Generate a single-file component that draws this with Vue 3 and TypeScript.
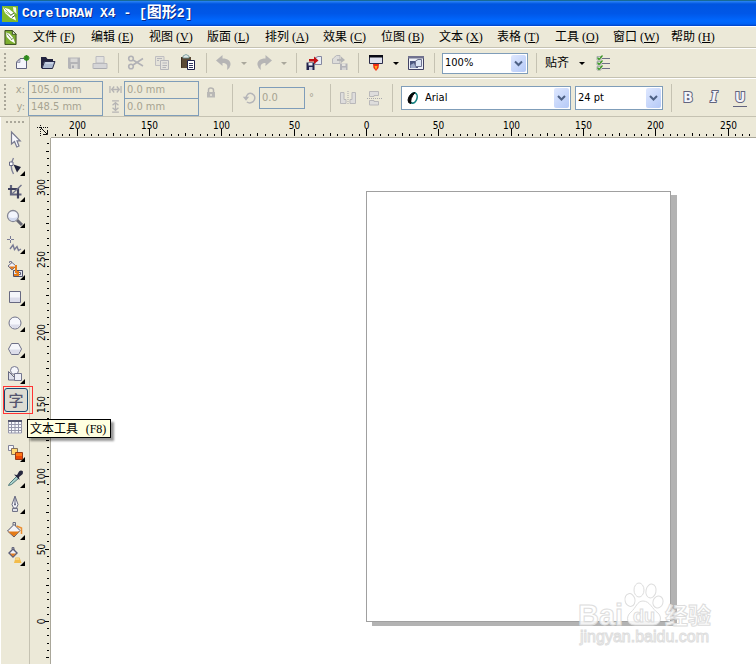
<script setup lang="ts">
import { computed, onMounted, onUnmounted, ref } from 'vue'

interface Menu { label: string; key: string }
interface Tool { id: string; name: string; flyout: boolean }
interface Tick { at: number; size: number; label: string }

const menus: Menu[] = [
  { label: '文件', key: 'F' },
  { label: '编辑', key: 'E' },
  { label: '视图', key: 'V' },
  { label: '版面', key: 'L' },
  { label: '排列', key: 'A' },
  { label: '效果', key: 'C' },
  { label: '位图', key: 'B' },
  { label: '文本', key: 'X' },
  { label: '表格', key: 'T' },
  { label: '工具', key: 'O' },
  { label: '窗口', key: 'W' },
  { label: '帮助', key: 'H' },
]

const standardBar: string[] = [
  'new', 'open', 'save', 'print', '|', 'cut', 'copy', 'paste', '|',
  'undo', 'v-off', 'redo', 'v-off', '|', 'import', 'export', '|', 'launch', 'v', 'welcome', '|',
]

const tools: Tool[] = [
  { id: 'pick', name: '挑选工具', flyout: false },
  { id: 'shape', name: '形状工具', flyout: true },
  { id: 'crop', name: '裁剪工具', flyout: true },
  { id: 'zoom', name: '缩放工具', flyout: true },
  { id: 'freehand', name: '手绘工具', flyout: true },
  { id: 'smart', name: '智能填充', flyout: true },
  { id: 'rect', name: '矩形工具', flyout: true },
  { id: 'ellipse', name: '椭圆形工具', flyout: true },
  { id: 'polygon', name: '多边形工具', flyout: true },
  { id: 'basic', name: '基本形状', flyout: true },
  { id: 'text', name: '文本工具', flyout: false },
  { id: 'table', name: '表格工具', flyout: false },
  { id: 'blend', name: '交互式调和工具', flyout: true },
  { id: 'dropper', name: '滴管工具', flyout: true },
  { id: 'pen', name: '轮廓工具', flyout: true },
  { id: 'fill', name: '填充工具', flyout: true },
  { id: 'ifill', name: '交互式填充', flyout: true },
]

const icons: Record<string, string> = {
  new: '<path d="M8 5.500H14.500V15.500H4.500V9z" fill="#f4f5fb" stroke="#5f617d"/><path d="M4.500 9.500L8 6V9.500z" fill="#c9cbdc" stroke="#77798f" stroke-width=".6"/><path d="M14.500 2v6M11.500 5h6M12.500 3l4 4M16.500 3l-4 4" stroke="#2f8a1c" stroke-width="1.700"/>',
  open: '<path d="M3 4H8L9.500 6H15V9H6L4 15H3z" fill="#23233f"/><path d="M6.500 8.500H17L14.500 15.500H4z" fill="#aebbd2" stroke="#262848"/><path d="M7.500 10H15" stroke="#e3e9f4"/>',
  save: '<path d="M4 4.500H16V16H5L4 15z" fill="#b4b4b7"/><path d="M6.500 5.500H13.500V9H6.500z" fill="#d8d7d5"/><path d="M7 11H13.500V16H7z" fill="#d9d8d5"/><path d="M8 12.500H10V15H8z" fill="#aaaab0"/>',
  print: '<path d="M6 3.500H14V10H6z" fill="#e2e1df" stroke="#bcbcc0"/><path d="M3 10.500H17V15.500H3z" fill="#d5d5d7" stroke="#b7b7bb"/><path d="M4 15.500H16" stroke="#aaabb0"/>',
  cut: '<g fill="none" stroke="#b2b2b6" stroke-width="1.600"><circle cx="5" cy="5.500" r="2.300"/><circle cx="5" cy="13.500" r="2.300"/><path d="M7 7L17 13M7 12L17 5.500"/></g>',
  copy: '<path d="M3.500 3.500H12V12.500H3.500z" fill="#e4e2d9" stroke="#c0bfc1"/><path d="M8.500 7.500H16.500V16.500H8.500z" fill="#e4e2dc" stroke="#b5b5ba"/><path d="M5 5.500H10M5 7.500H7M10.500 10H15M10.500 12.500H15M10.500 14.500H14" stroke="#b5b5ba"/>',
  paste: '<path d="M3 4H13V15H3z" fill="#5a4935"/><path d="M3.500 4.500V14.500" stroke="#3d3024"/><path d="M5 5V3Q8 0 11 3V5z" fill="#e0e6e5" stroke="#6a9393" stroke-width=".8"/><path d="M9.500 7.500H16.500V16.500H9.500z" fill="#fff" stroke="#1e2149"/><path d="M11 10.500H15M11 12.500H15M11 14.500H15" stroke="#343960"/>',
  undo: '<path d="M2 7.500L8.500 2V5.500C14 5.500 17 8 16.500 12Q16 15 13 17C14 12 13 10 8.500 10V13z" fill="#b6b5b5"/>',
  redo: '<path d="M18 7.500L11.500 2V5.500C6 5.500 3 8 3.500 12Q4 15 7 17C6 12 7 10 11.500 10V13z" fill="#b6b5b5"/>',
  import: '<path d="M11 5L14 3.500H17.500V11.500H11z" fill="#e8edf6" stroke="#8587a0"/><path d="M2.500 9.500H10.500V17H2.500z" fill="#23244d"/><path d="M4.500 10H8.500V12.500H4.500z" fill="#eceef5"/><path d="M5 14H8.500V17H5z" fill="#c6c9dc"/><path d="M5 6H10V3.500L14.500 7.500L10 11V8.500H5z" fill="#c20f12"/>',
  export: '<path d="M3.500 5L6.500 2.500H10V10.500H2.500V6z" fill="#dddcda" stroke="#b7b7bb"/><path d="M10 10.500H17.500V17H10z" fill="#b3b3b8"/><path d="M12 10.500H15.500V13H12z" fill="#e5e3dd"/><path d="M12 14.500H16V17H12z" fill="#d6d5d4"/><path d="M7 6H11V3.500L15 7L11 10V8H7z" fill="#b4b4b6"/>',
  launch: '<path d="M3.500 2.500H16.500V10.500H3.500z" fill="#dfe1ed" stroke="#2b2c4a"/><path d="M3 2H17V4.500H3z" fill="#090a13"/><path d="M7 11H13L12.500 15L10 18L7.500 15z" fill="#f02b12"/><path d="M8.500 13H11.500L10 17z" fill="#ffae18"/>',
  welcome: '<path d="M2.500 3.500H17.500V16.500H2.500z" fill="#eef1f8" stroke="#424364"/><path d="M2 3H18V5.500H2z" fill="#71728e"/><path d="M4 8H12V15H4z" fill="#4c577f"/><path d="M9.500 8L12 6.500H15.500V13.500H9.500z" fill="#dce5f4" stroke="#6f7391"/><path d="M4.500 12L8 10L10 15H4.500z" fill="#9fabc8"/>',
  options: '<path d="M9 5.500H17M9 10.500H17M9 15.500H17" stroke="#6e7086" stroke-width="1.200"/><path d="M4 3.500H8V7H4zM4 8.500H8V12H4zM4 13.500H8V17H4z" fill="#f4f4f4" stroke="#92929d" stroke-width=".7"/><path d="M4.500 4.500L6 6.500L9.500 2.500M4.500 9.500L6 11.500L9.500 7.500M4.500 14.500L6 16.500L9.500 12.500" fill="none" stroke="#3c9925" stroke-width="1.300"/>',
  pick: '<path d="M6.500 2V14L9.500 11.500L11.800 17L14 16L12 10.800H15.200z" fill="#f7f8fd" stroke="#77798f" stroke-width="1.200"/>',
  shape: '<path d="M8.500 2Q4 10 8.500 18" fill="none" stroke="#81839a" stroke-width="1.400"/><path d="M4.500 6H8V9.500H4.500z" fill="#fff" stroke="#686b86"/><path d="M8.500 8.500L16 11L12 16.500z" fill="#21233b"/>',
  crop: '<path d="M6 3V12.500H16.500" fill="none" stroke="#63657f" stroke-width="2.200"/><path d="M3 7H13V16.500" fill="none" stroke="#3f415d" stroke-width="2.200"/><path d="M7 12L16.500 3" stroke="#70728a" stroke-width="1.300"/>',
  zoom: '<path d="M12 12L17 17" stroke="#666773" stroke-width="3"/><circle cx="8" cy="8" r="5.500" fill="#f3f5fd" stroke="#858795" stroke-width="1.300"/><path d="M3.500 9Q8 11 12.500 9Q11.500 13 8 13Q4.500 13 3.500 9" fill="#d3daee"/>',
  freehand: '<path d="M5.500 2V9M2 5.500H9" stroke="#797b94"/><path d="M5 5H6V6H5z" fill="#fff"/><path d="M5 15L8 11L9.500 15.500L12 12.500L13.500 16.500L16 15" fill="none" stroke="#787a94" stroke-width="1.400"/>',
  smart: '<path d="M4.500 3V1.500H6.500V6" fill="none" stroke="#76798f"/><path d="M3 6L7 2.500L11 6L7 10z" fill="#f2f2f7" stroke="#6e7087"/><path d="M4 6.500H10L7 9.500z" fill="#df7519"/><path d="M8.500 10.500H17.500V16.500H8.500z" fill="#e3e5ef" stroke="#4e5069"/><path d="M12 12.500H15.500V14.500H12z" fill="#fff" stroke="#5c5e78"/><path d="M11 5V12H13V15H9" fill="none" stroke="#e77c16" stroke-width="2"/>',
  rect: '<path d="M4.500 5.500H15.500V16.500H4.500z" fill="#f5f6fa" stroke="#676981"/><path d="M5 11.500H15V16H5z" fill="#dcddea"/>',
  ellipse: '<circle cx="10" cy="11" r="6" fill="#f6f7fc" stroke="#707289"/><path d="M5 12.500H15Q13.500 16.300 10 16.300Q6.500 16.300 5 12.500" fill="#dcddea"/>',
  polygon: '<path d="M3.500 11L6.500 5.500H13.500L16.500 11L13.500 16.500H6.500z" fill="#f5f6fb" stroke="#6d6f87"/><path d="M4.500 11.500H15.500L13 16H7z" fill="#dcddea"/>',
  basic: '<circle cx="9.500" cy="6.500" r="4" fill="#f5f6fb" stroke="#74768e"/><path d="M3.500 7.500V16H12z" fill="#dedfea" stroke="#666880"/><path d="M9.500 9.500H16.500V16.500H9.500z" fill="#eeeff7" stroke="#74768e"/>',
  table: '<path d="M3 4.500H17V17.500H3z" fill="#f8f9fc"/><path d="M3.500 4.500H16.500V17H3.500zM3.500 8.500H16.500M3.500 11.500H16.500M3.500 14.500H16.500M6.500 5V17M10 5V17M13.500 5V17" fill="none" stroke="#9596aa"/><path d="M3 5H17" stroke="#55576f" stroke-width="2"/>',
  blend: '<path d="M3.500 3.500H8.500V8.500H3.500z" fill="#f8f8fc" stroke="#808298"/><path d="M6.500 6.500H12.500V12.500H6.500z" fill="#ffd875" stroke="#85705c"/><path d="M10.500 10.500H17.500V17.500H10.500z" fill="#ff7514" stroke="#983a19"/><path d="M11 14H17V17H11z" fill="#ee4806"/>',
  dropper: '<path d="M12 8L4.500 15.500L3.500 17.500L6.500 16.500L14 10" fill="#a7cfca" stroke="#527a7b"/><path d="M9 6.500L12 7L14 3.500Q16 1.500 18 3.500Q18.500 6 16 7.500L14 9L14.500 12z" fill="#26283f"/>',
  pen: '<path d="M10 2L7 10.500L8.500 14H11.500L13 10.500z" fill="#f6f7fb" stroke="#696b81"/><path d="M10 4V10" stroke="#60637d"/><circle cx="10" cy="10.500" r="1" fill="#5f617b"/><path d="M7.500 14.500H12.500V17.500H7.500z" fill="#dfe1e9" stroke="#707287"/>',
  fill: '<path d="M8 5V2.500H10.500V6" fill="none" stroke="#696b80"/><path d="M2.500 11L9 4.500L15 10.500L9 17z" fill="#f3f4f9" stroke="#505269"/><path d="M3 11.500H14.500L9 16.500z" fill="#e47a16"/><path d="M11.500 6L16.500 8V14" fill="none" stroke="#eb8e31" stroke-width="1.500"/>',
  ifill: '<path d="M7 3V1.500H9V4" fill="none" stroke="#696b80"/><path d="M4 7L8 3L12 7L8 11z" fill="#f3f4f9" stroke="#5a5d78" stroke-width="1.400"/><path d="M5 7.500H11L8 10.500z" fill="#dd7820"/><path d="M10.500 11.500H14.500L16.500 17H9z" fill="#f3bc4a"/><path d="M11 12H14L14.500 14H10z" fill="#f7d486"/>',
  width: '<path d="M3.500 6V14M16.500 6V14" stroke="#b5b4b4" stroke-width="1.500"/><path d="M5 10H15M8.500 6.500L5.500 10L8.500 13.500M11.500 6.500L14.500 10L11.500 13.500" fill="none" stroke="#b5b4b4" stroke-width="1.500"/>',
  height: '<path d="M6 3.500H14M6 16.500H14" stroke="#b5b4b4" stroke-width="1.500"/><path d="M10 5V15M6.500 8.500L10 5.500L13.500 8.500M6.500 11.500L10 14.500L13.500 11.500" fill="none" stroke="#b5b4b4" stroke-width="1.500"/>',
  lock: '<path d="M7.500 9V7Q7.500 5 9.500 5Q12.500 5 12.500 7V9" fill="none" stroke="#b4b3b1" stroke-width="1.500"/><path d="M6 9H14V14.500H6z" fill="#b9b8b6"/><path d="M9 11H11V13H9z" fill="#dddbd1"/>',
  rotate: '<path d="M6 15Q10 17.500 14 14.500Q17.500 10.500 15 6.500Q11 2.500 7 5.500Q5 7.500 5 10" fill="none" stroke="#b5b5b8" stroke-width="1.800"/><path d="M1 8.500H9L5 13.500z" fill="#b5b5b8"/>',
  mirrorh: '<path d="M2.500 4.500H6V11.500H8V15.500H2.500zM17.500 4.500H14V11.500H12V15.500H17.500z" fill="#dedddc" stroke="#b9b8ba"/><path d="M10 3V17" stroke="#a9a9ad" stroke-dasharray="1 1"/>',
  mirrorv: '<path d="M5.500 3.500H14.500V7.500H10V8.500H5.500zM5.500 12.500H10V13.500H14.500V17H5.500z" fill="#dedddc" stroke="#b9b8ba"/><path d="M3 10.500H18" stroke="#a9a9ad" stroke-dasharray="1 1"/>',
}

// Pixels per document unit, and where the page's zero lies on each ruler.
const scale = 1.447
const zeroX = 315
const zeroY = 483

const view = ref({ width: window.innerWidth, height: window.innerHeight })
const measure = () => {
  view.value = { width: window.innerWidth, height: window.innerHeight }
}
onMounted(() => window.addEventListener('resize', measure))
onUnmounted(() => window.removeEventListener('resize', measure))

const ticks = (length: number, zero: number, sign: number): Tick[] => {
  const list: Tick[] = []
  for (let step = -400; step <= 400; step++) {
    const unit = step * 5
    const at = Math.round(zero + sign * unit * scale) + 0.5
    if (at < 3 || at > length) continue
    const major = unit % 50 === 0
    const roomy = at > 12 && at < length - 12
    list.push({
      at,
      size: major ? 7 : unit % 25 === 0 ? 3 : 2,
      label: major && roomy ? String(Math.abs(unit)) : '',
    })
  }
  return list
}

const acrossTicks = computed(() => ticks(view.value.width - 51, zeroX, 1))
const downTicks = computed(() => ticks(view.value.height - 138, zeroY, -1))

const activeTool = ref('text')
const zoomLevel = ref('100%')
const fontName = ref('Arial')
const fontSize = ref('24 pt')
</script>

<template>
  <div class="app">
    <header class="title-bar">
      <svg class="logo" viewBox="0 0 16 16" aria-hidden="true">
        <path d="M0 0H16V16H0z" fill="#7fb92c" />
        <path d="M1 1.500L7 3L12 7L14 14.500L8 11.500L3 7z" fill="#fff" />
        <path d="M11 1L14 1.500L14.500 8L11.500 5z" fill="#f4f9ea" />
        <path d="M2 2L9 9M3.500 6L8.500 9" stroke="#7fa84a" stroke-width=".8" />
        <path d="M8.500 9.500L12 7M10 11.500L13 9.500" stroke="#3f5f22" />
      </svg>
      <h1>CorelDRAW X4 - [<span class="cjk">图形</span>2]</h1>
    </header>

    <nav class="menu-bar">
      <svg class="doc-icon" viewBox="0 0 14 17" aria-hidden="true">
        <path d="M1 1H9L13 5V16H1z" fill="#7daf31" stroke="#34461f" />
        <path d="M9 1V5H13z" fill="#fff" stroke="#34461f" />
        <path d="M2 3L6 4.500L10 9L12 15L7 12L3 8z" fill="#fff" />
        <path d="M3 4L8 10M7.500 11L10.500 9" stroke="#55762e" stroke-width=".8" />
      </svg>
      <button v-for="m in menus" :key="m.key" type="button" class="menu">
        {{ m.label }}<span class="key">(<u>{{ m.key }}</u>)</span>
      </button>
    </nav>

    <div class="bar standard" role="toolbar" aria-label="标准">
      <span class="grip"></span>
      <template v-for="(item, i) in standardBar" :key="i">
        <span v-if="item === '|'" class="sep"></span>
        <button v-else-if="item === 'v' || item === 'v-off'" type="button" class="drop" :class="{ off: item === 'v-off' }" :aria-label="item">
          <span class="caret"></span>
        </button>
        <button v-else type="button" class="btn" :aria-label="item">
          <svg viewBox="0 0 20 20" v-html="icons[item]"></svg>
        </button>
      </template>
      <label class="combo zoom-combo">
        <select v-model="zoomLevel" aria-label="缩放级别">
          <option>100%</option>
        </select>
        <svg class="arrow" viewBox="0 0 15 17"><path d="M4 6.500L7.500 10L11 6.500" /></svg>
      </label>
      <span class="sep"></span>
      <button type="button" class="snap">贴齐<span class="caret"></span></button>
      <button type="button" class="btn" aria-label="选项">
        <svg viewBox="0 0 20 20" v-html="icons.options"></svg>
      </button>
    </div>

    <div class="bar property" role="toolbar" aria-label="属性栏">
      <span class="grip"></span>
      <div class="pair">
        <label for="px">x:</label><input id="px" value="105.0 mm" disabled />
        <label for="py">y:</label><input id="py" value="148.5 mm" disabled />
      </div>
      <div class="pair sizes">
        <label for="pw" aria-label="宽度"><svg viewBox="0 0 20 20" v-html="icons.width"></svg></label>
        <input id="pw" value="0.0 mm" disabled />
        <label for="ph" aria-label="高度"><svg viewBox="0 0 20 20" v-html="icons.height"></svg></label>
        <input id="ph" value="0.0 mm" disabled />
      </div>
      <button type="button" class="btn lock" aria-label="锁定比例" disabled>
        <svg viewBox="0 0 20 20" v-html="icons.lock"></svg>
      </button>
      <span class="sep tall"></span>
      <label class="angle">
        <svg viewBox="0 0 20 20" v-html="icons.rotate"></svg>
        <input value="0.0" aria-label="旋转角度" disabled />
        <span class="degree">°</span>
      </label>
      <span class="sep tall"></span>
      <button type="button" class="btn" aria-label="水平镜像" disabled><svg viewBox="0 0 20 20" v-html="icons.mirrorh"></svg></button>
      <button type="button" class="btn" aria-label="垂直镜像" disabled><svg viewBox="0 0 20 20" v-html="icons.mirrorv"></svg></button>
      <span class="sep tall"></span>
      <label class="combo font-combo">
        <svg class="otype" viewBox="0 0 12 14" aria-hidden="true">
          <ellipse cx="6.500" cy="7" rx="3.500" ry="5.200" transform="rotate(18 6.500 7)" fill="#fff" stroke="#128080" stroke-width="1.600" />
          <path d="M8 1.500Q2 2.500 1 9Q1 12.500 4 12.500Q2.500 8 8 1.500" fill="#050505" stroke="#050505" />
        </svg>
        <select v-model="fontName" aria-label="字体">
          <option>Arial</option>
        </select>
        <svg class="arrow" viewBox="0 0 15 17"><path d="M4 6.500L7.500 10L11 6.500" /></svg>
      </label>
      <label class="combo size-combo">
        <select v-model="fontSize" aria-label="字号">
          <option>24 pt</option>
        </select>
        <svg class="arrow" viewBox="0 0 15 17"><path d="M4 6.500L7.500 10L11 6.500" /></svg>
      </label>
      <span class="sep tall"></span>
      <div class="styles">
        <button type="button" class="style">B</button>
        <button type="button" class="style italic">I</button>
        <button type="button" class="style under">U</button>
      </div>
    </div>

    <main class="workspace">
      <aside class="toolbox" role="toolbar" aria-label="工具箱">
        <span class="grip flat"></span>
        <button
          v-for="t in tools"
          :key="t.id"
          type="button"
          class="tool"
          :aria-label="t.name"
          :aria-pressed="t.id === activeTool"
          @click="activeTool = t.id"
        >
          <span v-if="t.id === 'text'" class="glyph">字</span>
          <svg v-else viewBox="0 0 20 20" v-html="icons[t.id]"></svg>
          <svg v-if="t.flyout" class="flyout" viewBox="0 0 5 5"><path d="M5 0V5H0z" /></svg>
          <span v-if="t.id === 'text'" class="frame"></span>
          <span v-if="t.id === 'text'" class="tip">文本工具 <span class="f8">(F8)</span></span>
        </button>
      </aside>

      <div class="corner">
        <svg viewBox="0 0 12 12" aria-hidden="true">
          <path d="M3.500 1V12M0 3.500H11" stroke="#111" stroke-dasharray="1 1" />
          <path d="M4 4L10 10M10.500 6V10.500H6" fill="none" stroke="#111" />
        </svg>
      </div>

      <svg class="ruler across" aria-hidden="true">
        <g v-for="t in acrossTicks" :key="t.at">
          <path :d="`M${t.at} ${19 - t.size}V19`" />
          <text v-if="t.label" :x="t.at" y="12">{{ t.label }}</text>
        </g>
      </svg>

      <svg class="ruler down" aria-hidden="true">
        <g v-for="t in downTicks" :key="t.at">
          <path :d="`M${19 - Math.min(t.size, 4)} ${t.at}H19`" />
          <text v-if="t.label" :transform="`translate(15 ${t.at}) rotate(-90)`">{{ t.label }}</text>
        </g>
      </svg>

      <section class="canvas">
        <div class="page"></div>
        <svg class="watermark" viewBox="0 0 140 68">
          <g class="mark">
            <text x="1" y="44" class="latin">Bai</text>
            <ellipse cx="53" cy="19" rx="5" ry="6.500" transform="rotate(-12 53 19)" />
            <ellipse cx="62" cy="9" rx="5" ry="7" />
            <ellipse cx="74" cy="10" rx="5" ry="7" transform="rotate(12 74 10)" />
            <ellipse cx="81" cy="21" rx="5" ry="6" transform="rotate(18 81 21)" />
            <path d="M66 20C73 20 75 28 81 32C86 37 83 44 76 44H58C50 44 48 36 54 31C59 27 60 20 66 20z" />
            <text x="56" y="41" class="du">du</text>
            <text x="88" y="43" class="han">经验</text>
            <text x="3" y="61" class="site">jingyan.baidu.com</text>
          </g>
        </svg>
      </section>
    </main>
  </div>
</template>

<style>
body {
  margin: 0;
  background: #ece9d8;
}
</style>

<style scoped>
.app {
  display: flex;
  flex-direction: column;
  min-height: 100vh;
  overflow: hidden;
  background: #ece9d8;
  color: #000;
  font: 11px/14px "DejaVu Sans Condensed", "Noto Sans CJK SC", sans-serif;
}

button {
  margin: 0;
  padding: 0;
  border: 0;
  background: none;
  color: inherit;
  font: inherit;
}

svg {
  display: block;
}

.title-bar {
  display: flex;
  align-items: center;
  height: 26px;
  box-sizing: border-box;
  padding-left: 2px;
  border-top: 1px solid #186a96;
  background: linear-gradient(#2c86f6 0, #0055e0 12%, #0057e8 50%, #0068ff 80%, #0062f4 92%, #0040c4 100%);
}

.logo {
  width: 16px;
  height: 16px;
}

.title-bar h1 {
  margin: 0 0 0 4px;
  color: #fff;
  font: bold 13px/18px "Liberation Mono", "Noto Sans CJK SC", monospace;
  text-shadow: 1px 1px 0 #0a2a8a;
  white-space: nowrap;
}

.title-bar .cjk {
  font-size: 15px;
}

.menu-bar {
  display: flex;
  height: 20px;
  padding-left: 4px;
  border-top: 1px solid #fff;
  border-bottom: 1px solid #c5c2b2;
}

.doc-icon {
  width: 13px;
  height: 17px;
  margin: 2px 16px 0 0;
}

.menu {
  flex: none;
  width: 58px;
  font: 12px/20px "Liberation Serif", "Noto Sans CJK SC", serif;
  text-align: left;
  white-space: nowrap;
}

.key {
  margin-left: 3px;
}

.bar {
  display: flex;
  align-items: center;
  border-top: 1px solid #fff;
  border-bottom: 1px solid #c5c2b2;
}

.standard {
  height: 28px;
}

.property {
  height: 37px;
}

.grip {
  flex: none;
  width: 2px;
  height: 20px;
  margin: 0 3px 0 4px;
  background: repeating-linear-gradient(#aaa79a 0 2px, transparent 2px 4px);
}

.property .grip {
  height: 28px;
}

.btn {
  flex: none;
  display: flex;
  justify-content: center;
  width: 26px;
}

.btn svg {
  width: 20px;
  height: 20px;
}

.sep {
  flex: none;
  width: 1px;
  height: 20px;
  margin: 0 4px 0 5px;
  background: #c5c2b2;
}

.sep.tall {
  height: 28px;
}

.drop {
  flex: none;
  display: flex;
  justify-content: center;
  width: 14px;
}

.caret {
  width: 0;
  height: 0;
  border: 3px solid transparent;
  border-top-color: #000;
  border-bottom: 0;
}

.off .caret {
  border-top-color: #aaa89c;
}

.combo {
  position: relative;
  flex: none;
  display: flex;
  align-items: center;
  box-sizing: border-box;
  border: 1px solid #7f9db9;
  background: #fff;
}

.combo select {
  flex: 1;
  height: 100%;
  padding: 0 0 0 2px;
  border: 0;
  outline: 0;
  appearance: none;
  background: transparent;
  color: #000;
  font: inherit;
}

.arrow {
  position: absolute;
  top: 1px;
  right: 1px;
  width: 15px;
  height: calc(100% - 2px);
  border-radius: 2px;
  background: linear-gradient(135deg, #dfe8ff, #b4c9f7);
  pointer-events: none;
}

.arrow path {
  fill: none;
  stroke: #4d6185;
  stroke-width: 2;
}

.zoom-combo {
  width: 86px;
  height: 21px;
  margin: 0 3px;
}

.snap {
  flex: none;
  display: flex;
  align-items: center;
  gap: 10px;
  margin: 0 5px 0 4px;
  font-size: 12px;
}

.pair {
  flex: none;
  display: grid;
  grid-template-columns: 19px 75px;
  grid-template-rows: 17px 17px;
  color: #a6a391;
}

.pair label {
  padding-right: 3px;
  line-height: 18px;
  text-align: right;
}

.sizes {
  margin-left: 4px;
  grid-template-columns: 17px 75px;
}

.sizes label {
  padding: 0;
}

.sizes svg {
  width: 17px;
  height: 17px;
}

.property input {
  box-sizing: border-box;
  width: 75px;
  height: 18px;
  padding: 0 0 0 2px;
  border: 1px solid #7f9db9;
  background: transparent;
  color: #a6a391;
  font: inherit;
}

.lock {
  width: 24px;
  margin: 0 4px 10px 0;
}

.angle {
  flex: none;
  display: flex;
  align-items: center;
  color: #a6a391;
}

.angle svg {
  width: 16px;
  height: 16px;
  margin: 0 1px 0 5px;
}

.property .angle input {
  width: 46px;
  height: 22px;
}

.degree {
  box-sizing: border-box;
  width: 20px;
  padding-left: 4px;
}

.font-combo {
  width: 170px;
  height: 24px;
  margin: 0 4px;
}

.otype {
  width: 12px;
  height: 14px;
  margin: 0 4px 0 5px;
}

.size-combo {
  width: 88px;
  height: 24px;
  margin-right: 3px;
}

.styles {
  display: flex;
  gap: 12px;
  margin-left: 5px;
}

.style {
  width: 14px;
  height: 18px;
  color: #f4f5fb;
  font: bold 14px/15px "DejaVu Sans Condensed", sans-serif;
  -webkit-text-stroke: 2px #62647e;
  paint-order: stroke fill;
}

.italic {
  font-family: "DejaVu Serif", serif;
  font-style: italic;
}

.under {
  border-bottom: 1px solid #62647e;
}

.workspace {
  flex: 1;
  display: grid;
  grid-template-columns: 30px 21px minmax(0, 1fr);
  grid-template-rows: 21px 1fr;
}

.toolbox {
  grid-row: 1 / 3;
  display: flex;
  flex-direction: column;
  padding: 4px 1px 0 0;
  border-left: 1px solid #fff;
  border-right: 1px solid #c5c2b2;
}

.grip.flat {
  width: 18px;
  height: 2px;
  margin: 0 0 4px 5px;
  background: repeating-linear-gradient(90deg, #aaa79a 0 2px, transparent 2px 4px);
}

.tool {
  position: relative;
  flex: none;
  display: flex;
  align-items: center;
  width: 27px;
  height: 26px;
  padding-left: 4px;
}

.tool svg {
  width: 20px;
  height: 20px;
}

.tool .flyout {
  position: absolute;
  right: 3px;
  bottom: 3px;
  width: 5px;
  height: 5px;
}

.glyph {
  box-sizing: border-box;
  width: 24px;
  height: 24px;
  margin-left: -1px;
  border: 1px solid #164773;
  border-radius: 3px;
  background: #dddcd3;
  color: #55566f;
  font: 500 15px/21px "Noto Sans CJK SC", sans-serif;
  text-align: center;
}

.frame {
  position: absolute;
  top: -1px;
  left: 2px;
  width: 28px;
  height: 26px;
  border: 1px solid #f33;
  z-index: 1;
}

.tip {
  position: absolute;
  top: 32px;
  left: 26px;
  z-index: 2;
  padding: 0 4px 0 2px;
  border: 1px solid #000;
  background: #ffffe1;
  box-shadow: 3px 3px 2px rgba(0, 0, 0, 0.4);
  font: 12px/15px "Noto Sans CJK SC", sans-serif;
  white-space: nowrap;
}

.f8 {
  margin-left: 5px;
  font: 12px/15px "Liberation Serif", serif;
}

.corner svg {
  width: 12px;
  height: 12px;
  margin: 7px 0 0 7px;
}

.ruler {
  width: 100%;
  height: 100%;
  box-sizing: border-box;
  overflow: hidden;
  font-size: 10px;
  text-anchor: middle;
}

.ruler path {
  stroke: #000;
}

.across {
  border-bottom: 1px solid #aaa79a;
}

.down {
  grid-column: 2;
  min-height: 0;
  border-right: 1px solid #aaa79a;
}

.canvas {
  position: relative;
  overflow: hidden;
  padding: 53px 24px 24px 315px;
  background: #fff;
}

.page {
  box-sizing: border-box;
  width: 305px;
  height: 431px;
  border: 1px solid #a0a0a0;
  background: #fff;
  box-shadow: 6px 4px 0 #b3b3b3;
}

.watermark {
  position: absolute;
  top: 443px;
  left: 526px;
  width: 140px;
  height: 68px;
}

.mark {
  fill: #fff;
  fill-opacity: 0.85;
  stroke: #ddd;
  stroke-width: 1;
}

.latin {
  font: bold 29px "Liberation Sans", sans-serif;
}

.du {
  font: bold 18px "Liberation Sans", sans-serif;
}

.han {
  font: bold 23px "Noto Sans CJK SC", sans-serif;
}

.site {
  font: 16px "Liberation Sans", sans-serif;
}
</style>
